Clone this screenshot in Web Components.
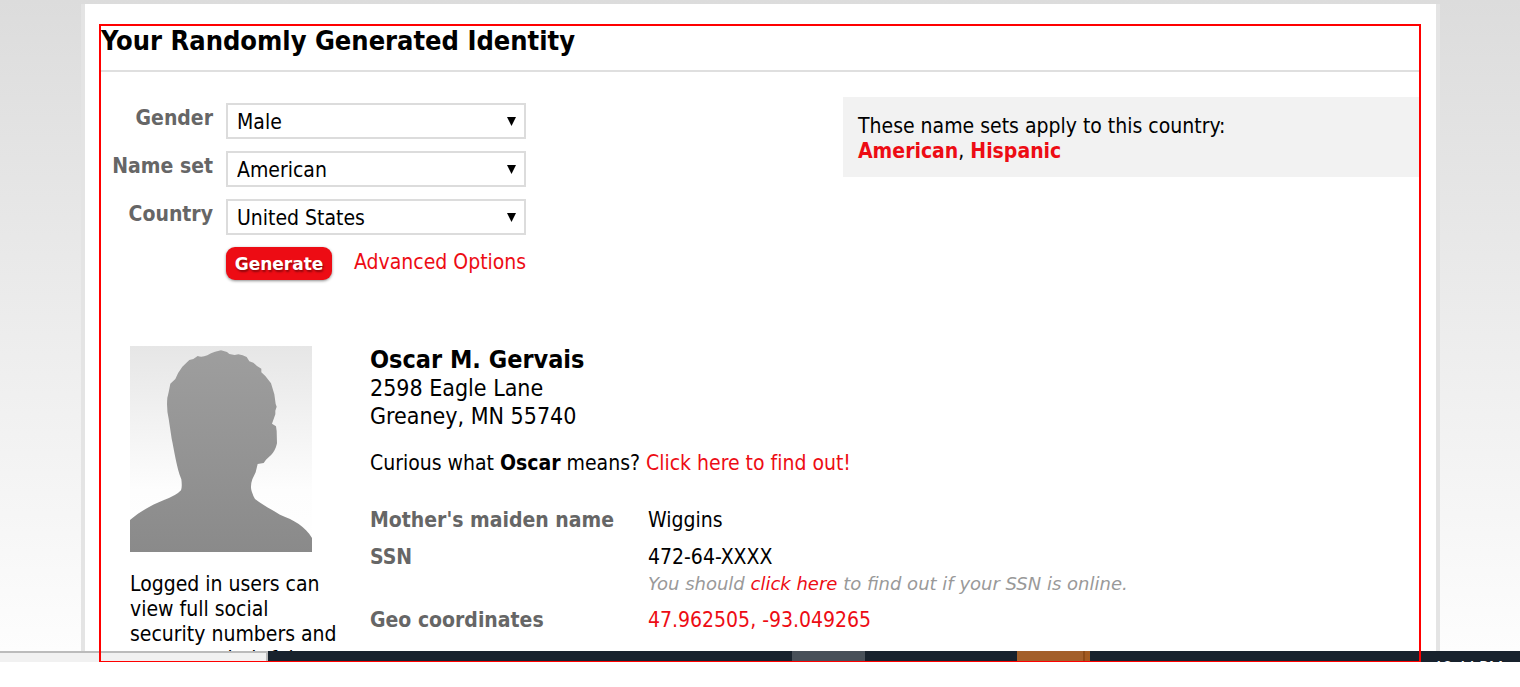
<!DOCTYPE html>
<html lang="en">
<head>
<meta charset="utf-8">
<title>Your Randomly Generated Identity</title>
<style>
html,body{margin:0;height:100%;background:#fff}
body{font:21px/25px "DejaVu Sans Condensed","DejaVu Sans",sans-serif;font-variant-ligatures:none;color:#000;overflow:hidden;
--red:#ed0c14;--grey:#666;--rule:#dcdcdc}
</style>
</head>
<body>
<desktop-shell>
  <site-page>
    <section-title>Your Randomly Generated Identity</section-title>
    <generator-form>
      <select-field label="Gender" options="Male|Female|Random"></select-field>
      <select-field label="Name set" options="American|Hispanic"></select-field>
      <select-field label="Country" options="United States|Canada|Australia"></select-field>
      <form-actions></form-actions>
      <name-sets slot="aside"></name-sets>
    </generator-form>
    <identity-card>
      <person-avatar slot="side"></person-avatar>
      <span slot="side">Logged in users can view full social security numbers and can save their fake names to use later.</span>
      <address-block></address-block>
      <identity-facts></identity-facts>
    </identity-card>
  </site-page>
  <task-bar slot="bar"></task-bar>
  <highlight-frame slot="overlay"></highlight-frame>
</desktop-shell>
<script>
const links = 'a{color:var(--red);text-decoration:none}';
const define = (name, html, setup) => {
  const template = document.createElement('template');
  template.innerHTML = html;
  customElements.define(name, class extends HTMLElement {
    constructor() {
      super();
      this.attachShadow({mode: 'open'}).append(template.content.cloneNode(true));
      if (setup) setup(this, this.shadowRoot);
    }
  });
};

define('desktop-shell', `<style>
:host{position:relative;display:grid;grid-template-rows:minmax(0,1fr) 11px;height:calc(100vh - 25px);overflow:hidden}
.view{overflow:hidden;background:linear-gradient(#dcdcdc,#fdfdfd)}
</style><div class="view"><slot></slot></div><slot name="bar"></slot><slot name="overlay"></slot>`);

define('site-page', `<style>
:host{display:block;box-sizing:border-box;min-height:100%;margin:4px 80px 0 81px;padding:22px 17px 0 16px;background:#fff;border:solid #e4e4e4;border-width:0 4px}
</style><slot></slot>`);

define('section-title', `<style>
:host{display:block;border-bottom:2px solid #dfdfdf}
h2{margin:0;padding-bottom:14px;font-size:27px;line-height:30px}
</style><h2><slot></slot></h2>`);

define('generator-form', `<style>
:host{display:grid;grid-template-columns:minmax(0,1fr) 576px;align-items:start;padding-top:25px}
form{display:grid;gap:12px;padding-top:6px}
</style><form><slot></slot></form><slot name="aside"></slot>`);

define('select-field', `<style>
:host{display:grid;grid-template-columns:112px 300px;column-gap:13px}
label{padding-top:3px;text-align:right;font-weight:bold;color:var(--grey)}
.box{position:relative}
select{display:block;width:100%;height:36px;box-sizing:border-box;margin:0;padding:2px 28px 0 9px;border:2px solid var(--rule);border-radius:0;background:#fff;appearance:none;font:inherit;color:inherit}
svg{position:absolute;right:10px;top:14px;pointer-events:none}
</style><label for="field"></label><div class="box"><select id="field"></select><svg width="9" height="9" viewBox="0 0 9 9"><path d="M0 0h9L4.5 9z"/></svg></div>`,
(host, root) => {
  root.querySelector('label').textContent = host.getAttribute('label');
  for (const text of host.getAttribute('options').split('|')) root.querySelector('select').add(new Option(text));
});

define('form-actions', `<style>${links}
:host{display:flex;align-items:flex-start;gap:22px;padding-left:125px}
button{width:106px;height:33px;margin:0;padding:2px 0 0;border:0;border-radius:9px;background:var(--red);color:#fff;font:bold 17px/25px "DejaVu Sans",sans-serif;text-shadow:1px 2px 2px rgba(0,0,0,.4);box-shadow:0 1px 3px rgba(0,0,0,.45)}
a{padding-top:3px}
</style><button type="submit">Generate</button><a href="#advanced">Advanced Options</a>`);

define('name-sets', `<style>${links}
:host{display:block;padding:17px 15px 13px;background:#f2f2f2}a{font-weight:bold}
</style>These name sets apply to this country:<br><a href="#american">American</a>, <a href="#hispanic">Hispanic</a>`);

define('identity-card', `<style>
:host{display:grid;grid-template-columns:210px minmax(0,1fr);column-gap:30px;padding:66px 0 0 29px}
.side{display:grid;gap:20px;align-content:start}
</style><div class="side"><slot name="side"></slot></div><div><slot></slot></div>`);

define('person-avatar', `<style>:host,svg{display:block}</style>
<svg width="182" height="206" viewBox="0 0 546 618" role="img" aria-label="Profile silhouette">
<defs><linearGradient id="back" x2="0" y2="1"><stop stop-color="#e6e6e6"/><stop offset=".7" stop-color="#fdfdfd"/><stop offset="1" stop-color="#fff"/></linearGradient>
<linearGradient id="body" x2="0" y2="1"><stop stop-color="#9e9e9e"/><stop offset="1" stop-color="#8a8a8a"/></linearGradient></defs>
<path fill="url(#back)" d="M0 0h546v618H0z"/>
<path fill="url(#body)" d="M0 522C30 496 65 477 102 462Q140 448 153 433Q157 423 154 400C140 365 132 310 125 278L116 218Q109 190 112 155Q116 140 121 113L136 99Q143 80 157 62L178 42L190 39L203 30Q215 35 232 28L243 22L255 17L273 13L291 18L298 24L314 27L325 25L338 28L350 33L358 46L370 50L381 60L394 68L394 79L406 90L423 112L433 145L437 174L440 182L436 194L436 205L426 233L438 241L440 255L441 292C437 310 431 319 424 326L408 341L401 351L383 354L377 379L367 400Q360 420 365 436Q370 452 375 459C398 477 424 490 450 506C493 523 525 540 546 576V618H0z"/></svg>`);

define('address-block', `<style>${links}
:host{display:block}
h3,p{margin:0}h3{font-size:25px;line-height:28px}
.street{font-size:23px;line-height:28px}
.meaning{margin-top:21px}
</style><h3>Oscar M. Gervais</h3><p class="street">2598 Eagle Lane<br>Greaney, MN 55740</p>
<p class="meaning">Curious what <b>Oscar</b> means? <a href="#meaning">Click here to find out!</a></p>`);

define('identity-facts', `<style>${links}
:host{display:block;padding-top:32px}
dl{display:grid;grid-template-columns:278px minmax(0,1fr);row-gap:12px;margin:0}
dt{font-weight:bold;color:var(--grey)}dd{margin:0}
em{display:block;padding-top:1px;font:italic 18px/25px "DejaVu Sans",sans-serif;color:#999}
</style><dl><dt>Mother's maiden name</dt><dd>Wiggins</dd>
<dt>SSN</dt><dd>472-64-XXXX<em>You should <a href="#ssn">click here</a> to find out if your SSN is online.</em></dd>
<dt>Geo coordinates</dt><dd><a href="#map">47.962505, -93.049265</a></dd></dl>`);

define('task-bar', `<style>
:host{display:grid;grid-template-columns:268px 524fr 73px 152fr 73px 344fr 86px;background:#18222d;overflow:hidden}
.status{box-sizing:border-box;background:#f1f1f1;border:solid #bbb;border-width:2px 2px 0 0}
.app{grid-column:3;background:#485059}.alert{grid-column:5;background:#a35f2a;box-shadow:inset -5px 0 #a35a20,inset -7px 0 #8d4b17}
time{grid-column:7;padding-top:6px;color:#fff;font:16px/20px "Noto Sans",sans-serif;white-space:nowrap}
</style><div class="status"></div><div class="app"></div><div class="alert"></div><time>12:44 PM</time>`);

define('highlight-frame', `<style>
:host{position:absolute;inset:24px 99px 0;border:2px solid red;border-bottom-width:1px;pointer-events:none}
</style>`);
</script>
</body>
</html>
